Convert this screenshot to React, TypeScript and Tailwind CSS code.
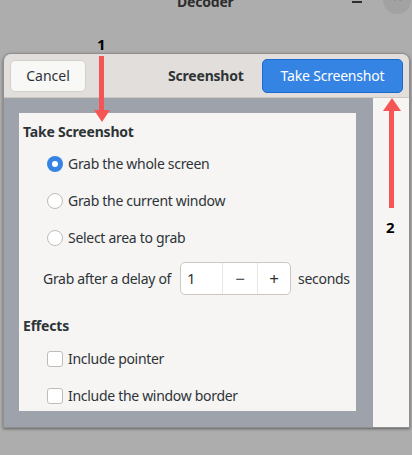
import React from "react";

const font = { fontFamily: '"Noto Sans", "Open Sans", sans-serif' };

function Radio({ checked }: { checked?: boolean }) {
    if (checked) {
        return (
            <span className="w-[16px] h-[16px] rounded-full bg-[#3584e4] flex items-center justify-center shrink-0">
                <span className="w-[6px] h-[6px] rounded-full bg-white" />
            </span>
        );
    }
    return <span className="w-[16px] h-[16px] rounded-full border border-[#c0bdb9] bg-white shrink-0" />;
}

function Check() {
    return <span className="w-[16px] h-[16px] rounded-[3px] border border-[#c0bdb9] bg-white shrink-0" />;
}

function Row({ children }: { children: React.ReactNode }) {
    return (
        <div className="flex items-center gap-[5px] pl-[24px] h-[37px] text-[14px] tracking-[-0.3px] text-[#2e3436] whitespace-nowrap">
            {children}
        </div>
    );
}

export default function App() {
    return (
        <div className="relative w-[412px] h-[455px] bg-[#adadad] overflow-hidden" style={font}>
            {/* title bar of the parent window, cut off at the top */}
            <div className="relative h-[53px]">
                <div className="absolute left-[177px] top-[-9px] text-[14px] font-bold tracking-[-0.2px] text-[#2e2e2e]">Decoder</div>
                <div className="absolute left-[352px] top-[1px] w-[10px] h-[2px] bg-[#2e2e2e]" />
                <div className="absolute left-[383px] top-[-14px] w-[28px] h-[28px] rounded-full bg-[#a2a2a2] flex items-end justify-center pb-[12px]">
                    <span className="text-[11px] leading-none font-bold text-[#2e2e2e]">✕</span>
                </div>
            </div>

            {/* dialog */}
            <div className="ml-[3px] w-[407px] h-[375px] rounded-t-[8px] overflow-hidden shadow-[0_1px_3px_rgba(0,0,0,0.45)] border border-[#8f8f8f] flex flex-col">
                <div className="h-[44px] bg-[#e1dedb] border-b border-[#cdc7c2] flex items-center px-[6px] shrink-0">
                    <button className="w-[76px] h-[32px] rounded-[5px] bg-[#f8f8f7] border border-[#d5d0cc] text-[14px] text-[#2e3436]">
                        Cancel
                    </button>
                    <div className="ml-[82px] text-[14px] font-bold text-[#2e3436] tracking-[-0.2px]">Screenshot</div>
                    <button className="ml-auto w-[141px] h-[34px] rounded-[5px] bg-[#3584e4] border border-[#1b6acb] text-[14px] tracking-[-0.2px] text-white">
                        Take Screenshot
                    </button>
                </div>
                <div className="flex flex-1">
                    <div className="w-[369px] bg-[#9da2ab] pt-[15px] pl-[15px] pb-[16px]">
                        <div className="w-[337px] h-[298px] bg-[#f6f5f4] pl-[4px] pt-[6px]">
                            <div className="text-[14px] font-bold text-[#2e3436] tracking-[-0.2px] h-[24px] flex items-center">Take Screenshot</div>
                            <div className="mt-[2px]">
                                <Row><Radio checked /><span>Grab the whole screen</span></Row>
                                <Row><Radio /><span>Grab the current window</span></Row>
                                <Row><Radio /><span>Select area to grab</span></Row>
                            </div>
                            <div className="flex items-center mt-[6px] pl-[20px] text-[14px] tracking-[-0.3px] text-[#2e3436] whitespace-nowrap">
                                <span>Grab after a delay of</span>
                                <div className="ml-[9px] w-[111px] h-[33px] bg-white border border-[#cdc7c2] rounded-[5px] flex shrink-0">
                                    <div className="w-[41px] pl-[6px] flex items-center text-[15px]">1</div>
                                    <div className="w-[35px] border-l border-[#e8e6e3] flex items-center justify-center text-[17px]">−</div>
                                    <div className="flex-1 border-l border-[#e8e6e3] flex items-center justify-center text-[17px]">+</div>
                                </div>
                                <span className="ml-[7px]">seconds</span>
                            </div>
                            <div className="text-[14px] font-bold text-[#2e3436] tracking-[-0.2px] mt-[18px] h-[24px] flex items-center">Effects</div>
                            <div className="mt-[3px]">
                                <Row><Check /><span>Include pointer</span></Row>
                                <Row><Check /><span>Include the window border</span></Row>
                            </div>
                        </div>
                    </div>
                    <div className="flex-1 bg-[#f6f5f4]" />
                </div>
            </div>

            {/* annotation arrows */}
            <div className="absolute left-[97px] top-[33px] text-[15px] font-bold text-black">1</div>
            <svg className="absolute left-[93px] top-[56px]" width="18" height="67" viewBox="0 0 18 67">
                <rect x="6" y="0" width="5" height="55" fill="#f55555" />
                <polygon points="1,54 17,54 9,66" fill="#f55555" />
            </svg>
            <svg className="absolute left-[382px] top-[97px]" width="20" height="112" viewBox="0 0 20 112">
                <polygon points="10,1 1,14 19,14" fill="#f55555" />
                <rect x="7" y="13" width="5" height="98" fill="#f55555" />
            </svg>
            <div className="absolute left-[386px] top-[216px] text-[15px] font-bold text-black">2</div>
        </div>
    );
}
